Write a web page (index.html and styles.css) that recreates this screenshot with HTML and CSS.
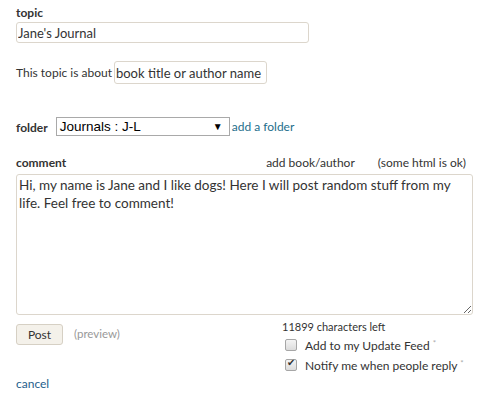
FILE: index.html
```html
<!DOCTYPE html>
<html>
<head>
<meta charset="utf-8">
<link rel="stylesheet" href="styles.css">
</head>
<body>
<form class="form">
  <div class="field topic-field">
    <label class="lbl">topic</label>
    <input class="text-input topic-input" type="text" value="Jane's Journal">
  </div>
  <div class="about-row">
    <span>This topic is about</span>
    <input class="text-input about-input" type="text" value="book title or author name">
  </div>
  <div class="folder-row">
    <label class="lbl">folder</label>
    <div class="select">
      <span class="select-text">Journals&nbsp;:&nbsp;J-L</span>
      <span class="select-arrow">&#9660;</span>
    </div>
    <a class="link" href="#">add a folder</a>
  </div>
  <div class="comment-head">
    <label class="lbl">comment</label>
    <div class="comment-links">
      <a class="link" href="#">add book/author</a>
      <span class="hint">(some html is ok)</span>
    </div>
  </div>
  <textarea class="comment-box">Hi, my name is Jane and I like dogs! Here I will post random stuff from my life. Feel free to comment!</textarea>
  <div class="bottom">
    <div class="actions">
      <button class="post-btn" type="button">Post</button>
      <a class="preview" href="#">(preview)</a>
    </div>
    <div class="options">
      <div class="chars">11899 characters left</div>
      <label class="check"><input type="checkbox"><span>Add to my Update Feed <span class="star">*</span></span></label>
      <label class="check"><input type="checkbox" checked><span>Notify me when people reply <span class="star">*</span></span></label>
    </div>
  </div>
  <a class="cancel" href="#">cancel</a>
</form>
</body>
</html>
```
FILE: styles.css
```css
html, body {
  margin: 0;
  padding: 0;
  background: #fff;
}
body {
  font-family: Lato, "Open Sans", sans-serif;
  color: #333;
  font-size: 12px;
}
.form {
  padding: 5px 16px 0 16px;
  display: flex;
  flex-direction: column;
  align-items: flex-start;
}
.lbl {
  font-weight: bold;
  font-size: 12px;
  color: #333;
}
.field {
  display: flex;
  flex-direction: column;
  gap: 2px;
}
.text-input {
  font-family: Lato, sans-serif;
  font-size: 13px;
  color: #333;
  border: 1px solid #dcd6cc;
  border-radius: 3px;
  padding: 0 1px;
  box-sizing: border-box;
  outline: none;
  background: #fff;
}
.topic-input {
  width: 293px;
  height: 21px;
}
.about-row {
  margin-top: 18px;
  display: flex;
  align-items: center;
  gap: 2px;
  font-size: 12px;
}
.about-input {
  width: 153px;
  height: 23px;
  padding: 0 1px;
}
.folder-row {
  margin-top: 33px;
  display: flex;
  align-items: center;
}
.folder-row .lbl {
  margin-right: 8px;
  margin-top: 2px;
}
.select {
  width: 174px;
  height: 19px;
  box-sizing: border-box;
  border: 1px solid #a9a9a9;
  display: flex;
  align-items: center;
  justify-content: space-between;
  padding: 0 6px 0 3px;
  font-family: "Liberation Sans", Arial, sans-serif;
  font-size: 13.5px;
  color: #000;
}
.select-arrow {
  font-size: 10px;
}
.link {
  color: #1e6e8c;
  text-decoration: none;
  font-size: 12px;
}
.folder-row .link {
  margin-left: 2px;
}
.comment-head {
  margin-top: 19px;
  display: flex;
  justify-content: space-between;
  align-items: baseline;
  width: 450px;
}
.comment-links {
  display: flex;
  gap: 23px;
}
.comment-links .link {
  color: #333;
}
.hint {
  font-size: 12px;
  color: #333;
}
.comment-box {
  margin-top: 4px;
  width: 457px;
  height: 141px;
  box-sizing: border-box;
  border: 1px solid #dcd6cc;
  border-radius: 3px;
  font-family: Lato, sans-serif;
  font-size: 13.5px;
  line-height: 18px;
  color: #333;
  padding: 1px 2px;
  resize: vertical;
  outline: none;
}
.bottom {
  display: flex;
  margin-top: 5px;
}
.actions {
  width: 266px;
  display: flex;
  align-items: flex-start;
  gap: 11px;
  padding-top: 4px;
}
.post-btn {
  width: 47px;
  height: 21px;
  background: #f4f1ea;
  border: 1px solid #d6d0c4;
  border-radius: 3px;
  font-family: Lato, sans-serif;
  font-size: 12px;
  color: #333;
  padding: 0;
}
.preview {
  color: #999;
  text-decoration: none;
  font-size: 11.5px;
  margin-top: 3px;
}
.options {
  display: flex;
  flex-direction: column;
  white-space: nowrap;
}
.chars {
  font-size: 11px;
  color: #333;
}
.check {
  display: flex;
  align-items: center;
  height: 16px;
  font-size: 12px;
  margin-left: 3px;
  margin-top: 4px;
  gap: 8px;
}
.check + .check {
  margin-top: 4px;
}
.check input {
  appearance: none;
  -webkit-appearance: none;
  margin: 0;
  width: 12px;
  height: 12px;
  border: 1px solid #a6a6a6;
  border-radius: 2px;
  background: linear-gradient(#f4f4f4, #dcdcdc);
  box-sizing: border-box;
  position: relative;
}
.check input:checked::after {
  content: "\2714";
  position: absolute;
  left: 1px;
  top: -3px;
  font-size: 10px;
  color: #333;
}
.star {
  font-size: 8px;
  color: #aaa;
  vertical-align: 4px;
}
.cancel {
  margin-top: 3px;
  color: #1e5e8c;
  text-decoration: none;
  font-size: 12px;
}
```
